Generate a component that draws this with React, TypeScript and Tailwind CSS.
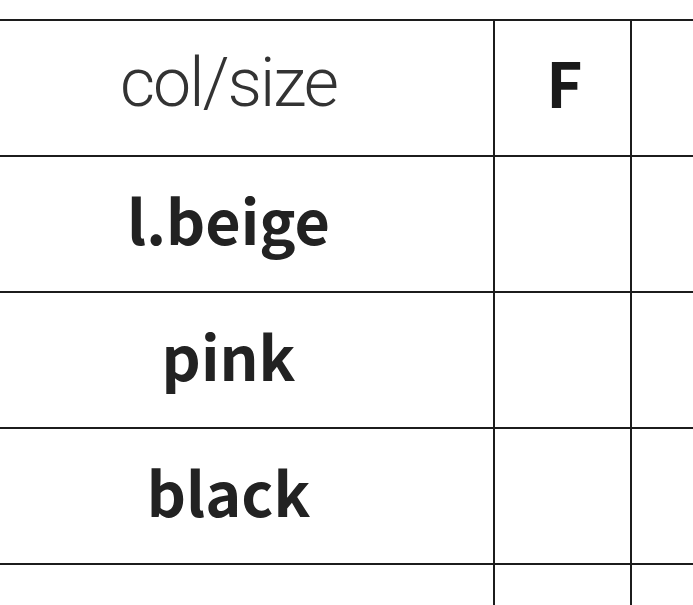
import React from "react";

const ROWS = ["l.beige", "pink", "black", ""];

export default function App() {
  return (
    <div className="w-[693px] h-[605px] overflow-hidden bg-white">
      <div className="mt-[19px] w-[760px] border-t-2 border-[#1c1c1c]">
        {/* header */}
        <div className="flex h-[136px] border-b-2 border-[#1c1c1c]">
          <div className="w-[495px] border-r-2 border-[#1c1c1c] flex items-center justify-center pr-[36px]">
            <span className="text-[68px] font-light text-[#333] tracking-[-2px] pb-[10px]" style={{ fontFamily: "Roboto, 'Noto Sans', sans-serif" }}>
              col/size
            </span>
          </div>
          <div className="w-[137px] border-r-2 border-[#1c1c1c] flex items-center justify-center pl-[4px]">
            <span className="text-[62px] font-bold text-[#1a1a1a] pb-[14px]" style={{ fontFamily: "'Noto Sans CJK JP', sans-serif" }}>F</span>
          </div>
          <div className="flex-1" />
        </div>
        {ROWS.map((r, i) => (
          <div key={i} className="flex h-[136px] border-b-2 border-[#1c1c1c]">
            <div className="w-[495px] border-r-2 border-[#1c1c1c] flex items-center justify-center pr-[36px]">
              <span className="text-[61px] font-bold text-[#222] pb-[10px]" style={{ fontFamily: "'Noto Sans CJK JP', sans-serif" }}>
                {r}
              </span>
            </div>
            <div className="w-[137px] border-r-2 border-[#1c1c1c]" />
            <div className="flex-1" />
          </div>
        ))}
      </div>
    </div>
  );
}
